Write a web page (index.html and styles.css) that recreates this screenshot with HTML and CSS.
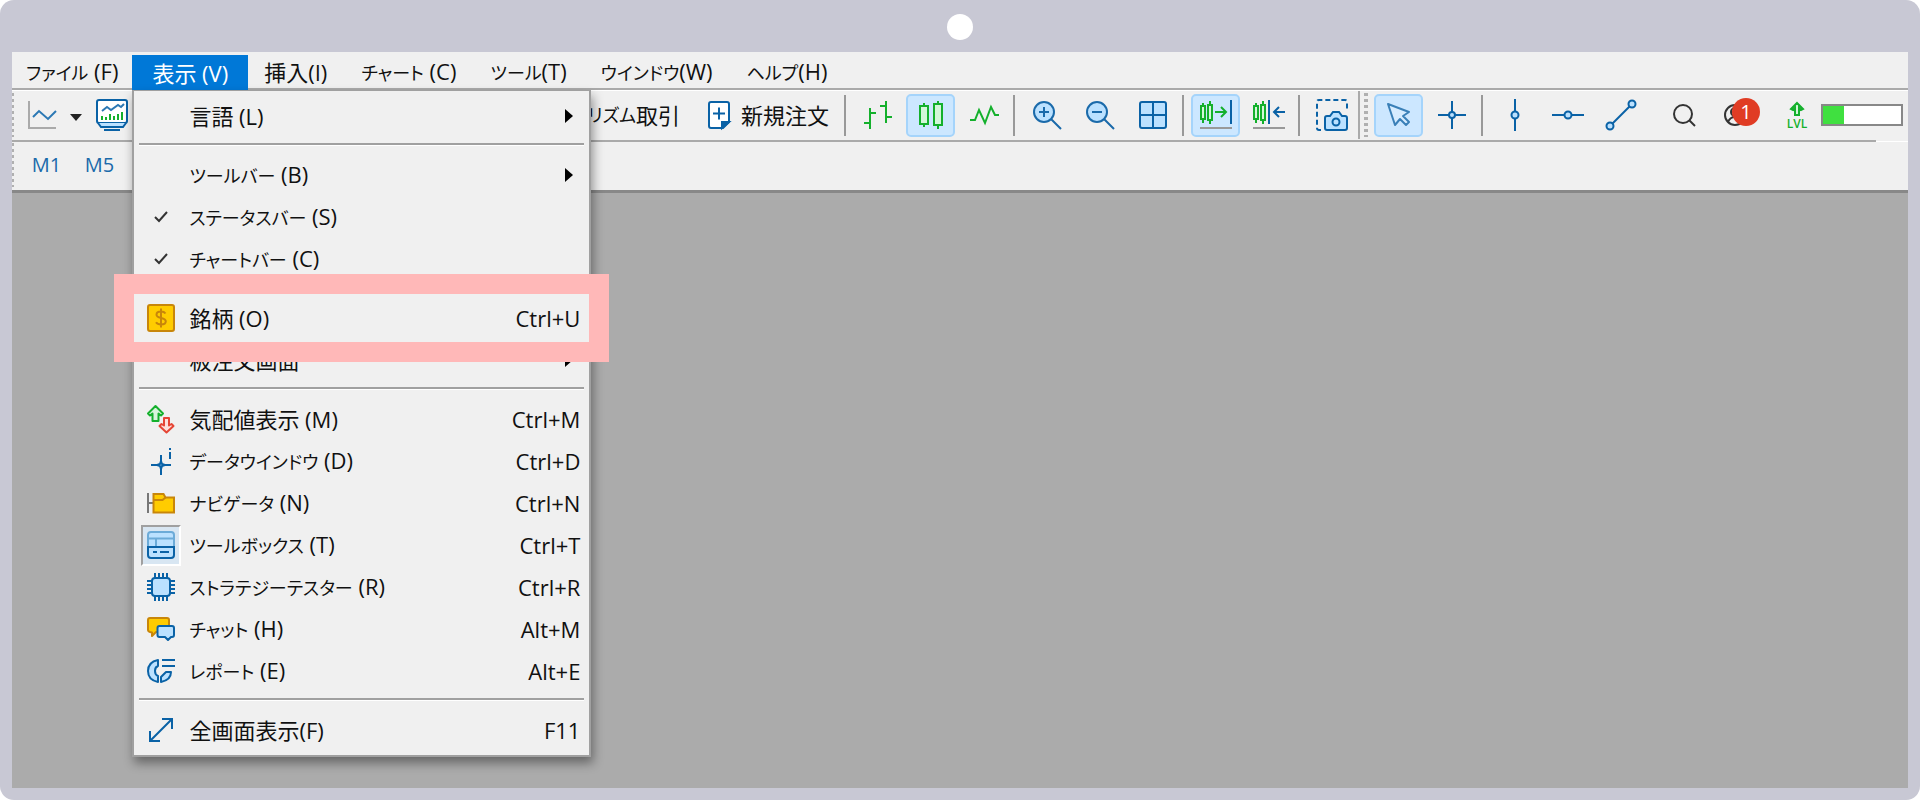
FILE: index.html
```html
<!DOCTYPE html>
<html lang="ja">
<head>
<meta charset="utf-8">
<meta name="viewport" content="width=device-width, initial-scale=1">
<title>表示</title>
<link rel="stylesheet" href="styles.css">
</head>
<body>
<div class="device">
  <div class="bezel"><span class="camera"></span></div>
  <div class="app">
    <nav class="menubar">
      <button class="menubar-item"><span class="kana">ファイル</span> (F)</button>
      <div class="menubar-open">
        <button class="menubar-item active" aria-expanded="true">表示 (V)</button>
        <div class="menu" role="menu">
          <button class="row" role="menuitem"><span class="ico"></span><span class="label">言語 (L)</span><span class="arrow"></span></button>
          <hr>
          <button class="row" role="menuitem"><span class="ico"></span><span class="label"><span class="kana">ツールバー</span> (B)</span><span class="arrow"></span></button>
          <button class="row" role="menuitem"><span class="ico"><svg width="14" height="12" viewBox="0 0 14 12"><path d="M1 6l4 4L13 1" fill="none" stroke="#333" stroke-width="2"/></svg></span><span class="label"><span class="kana">ステータスバー</span> (S)</span></button>
          <button class="row" role="menuitem"><span class="ico"><svg width="14" height="12" viewBox="0 0 14 12"><path d="M1 6l4 4L13 1" fill="none" stroke="#333" stroke-width="2"/></svg></span><span class="label"><span class="kana">チャートバー</span> (C)</span></button>
          <hr>
          <button class="row marked" role="menuitem"><span class="ico"><svg width="28" height="28" viewBox="0 0 28 28"><rect x="1" y="1" width="26" height="26" rx="2" fill="#ffcc00" stroke="#c8860a" stroke-width="2"/><path d="M18.500 9.500C17.500 8 16 7.500 14 7.500c-2.500 0-4.500 1-4.500 3.200 0 4.300 9.300 2.200 9.300 6.600 0 2.200-2.100 3.200-4.800 3.200-2.200 0-4-.7-5-2.300M14 4.500v19" fill="none" stroke="#c8860a" stroke-width="2"/></svg></span><span class="label">銘柄 (O)</span><kbd>Ctrl+U</kbd></button>
          <button class="row" role="menuitem"><span class="ico"></span><span class="label">板注文画面</span><span class="arrow"></span></button>
          <hr>
          <button class="row" role="menuitem"><span class="ico"><svg width="28" height="28" viewBox="0 0 28 28" stroke-width="2" stroke-linejoin="round"><path d="M8.500 1L16 8.500l-2 2-2.500-2V16h-6V8.500l-2.500 2-2-2z" fill="#d8f5dc" stroke="#14b02c"/><path d="M19.500 27.500L12.500 21l2-2 2.500 1.500V13h5v7.500l2.500-1.500 2 2z" fill="#fde0dc" stroke="#e54535"/></svg></span><span class="label">気配値表示 (M)</span><kbd>Ctrl+M</kbd></button>
          <button class="row" role="menuitem"><span class="ico"><svg width="28" height="28" viewBox="0 0 28 28" fill="none" stroke="#0a62a6" stroke-width="2"><path d="M14 8v7M14 21v7M4 18h7M17 18h7M23 5v7M23 1v2"/><path d="M14 14l1 3 3 1-3 1-1 3-1-3-3-1 3-1z" fill="#bbe1ff"/></svg></span><span class="label"><span class="kana">データウインドウ</span> (D)</span><kbd>Ctrl+D</kbd></button>
          <button class="row" role="menuitem"><span class="ico"><svg width="28" height="28" viewBox="0 0 28 28"><path d="M1 4v20M1 14h5" fill="none" stroke="#777" stroke-width="2"/><path d="M6.500 5h10l2 3.500h8.500v15H6.500z" fill="#ffcc00" stroke="#c8860a" stroke-width="2"/><path d="M6.500 11h9l3-2.500" fill="none" stroke="#c8860a" stroke-width="2"/></svg></span><span class="label"><span class="kana">ナビゲータ</span> (N)</span><kbd>Ctrl+N</kbd></button>
          <button class="row" role="menuitem"><span class="ico pressed"><svg width="28" height="28" viewBox="0 0 28 28" stroke-width="2"><path d="M1 16V4q0-3 3-3h20q3 0 3 3v12z" fill="#bbe1ff" stroke="#6cabd8"/><path d="M1 7.500h26M9 7.500V16" stroke="#6cabd8"/><path d="M1 16h26v8q0 3-3 3H4q-3 0-3-3z" fill="#bbe1ff" stroke="#0a62a6"/><path d="M6 21h4M13 21h9" stroke="#0a62a6"/></svg></span><span class="label"><span class="kana">ツールボックス</span> (T)</span><kbd>Ctrl+T</kbd></button>
          <button class="row" role="menuitem"><span class="ico"><svg width="28" height="28" viewBox="0 0 28 28" stroke="#0a62a6" stroke-width="2"><path d="M8 0v28M12 0v28M16 0v28M20 0v28M0 8h28M0 12h28M0 16h28M0 20h28"/><rect x="5" y="5" width="18" height="18" rx="3" fill="#bbe1ff"/></svg></span><span class="label"><span class="kana">ストラテジーテスター</span> (R)</span><kbd>Ctrl+R</kbd></button>
          <button class="row" role="menuitem"><span class="ico"><svg width="28" height="28" viewBox="0 0 28 28" stroke-width="2" stroke-linejoin="round"><path d="M3 3h17q2 0 2 2v10q0 2-2 2H9l-4 4v-3.500Q1 17 1 15V5q0-2 2-2z" fill="#ffcc00" stroke="#c8860a"/><path d="M12.500 11h12.500q2 0 2 2v7q0 2-2 2h-1l-3 3-3-3h-5.500q-2 0-2-2v-7q0-2 2-2z" fill="#bbe1ff" stroke="#0a62a6"/></svg></span><span class="label"><span class="kana">チャット</span> (H)</span><kbd>Alt+M</kbd></button>
          <button class="row" role="menuitem"><span class="ico"><svg width="28" height="28" viewBox="0 0 28 28" fill="#bbe1ff" stroke="#0a62a6" stroke-width="2" stroke-linejoin="round"><path d="M11 3v6q-3 1-3 5t3 5v6Q1 23 1 14T11 3zM14 25v-5l5-5h5q0 8-10 10z"/><path d="M15 3h13M15 9h13"/></svg></span><span class="label"><span class="kana">レポート</span> (E)</span><kbd>Alt+E</kbd></button>
          <hr>
          <button class="row" role="menuitem"><span class="ico"><svg width="28" height="28" viewBox="0 0 28 28" fill="none" stroke="#0a62a6" stroke-width="2"><path d="M3 25L25 3M15 3h10v10M3 15v10h10"/></svg></span><span class="label">全画面表示(F)</span><kbd>F11</kbd></button>
        </div>
      </div>
      <button class="menubar-item">挿入(I)</button>
      <button class="menubar-item"><span class="kana">チャート</span> (C)</button>
      <button class="menubar-item"><span class="kana">ツール</span>(T)</button>
      <button class="menubar-item"><span class="kana">ウインドウ</span>(W)</button>
      <button class="menubar-item"><span class="kana">ヘルプ</span>(H)</button>
    </nav>

    <div class="toolbar">
      <span class="grip"></span>
      <div class="tools-start">
        <button class="tool narrow" aria-label="チャート"><svg width="30" height="30" viewBox="0 0 30 30" fill="none" stroke-width="2"><path d="M2 1v27h27" stroke="#aaa"/><path d="M6 17l6-6 9 8 8-8" stroke="#2b78b4"/></svg></button>
        <span class="caret"></span>
        <button class="tool narrow" aria-label="画面"><svg width="32" height="32" viewBox="0 0 32 32" fill="none" stroke="#0a62a6" stroke-width="2"><rect x="1" y="1" width="30" height="23" rx="2" fill="#fff"/><path d="M2 24l3 4h22l3-4M8 31h16" fill="#bbe1ff"/><path d="M6 12l5-4 4 3 7-5 3 2 3-3" stroke="#2b78b4"/><path d="M6 21v-4M10 21v-3M14 21v-6M18 21v-4M22 21v-6M26 21v-8" stroke="#14b02c"/></svg></button>
        <button class="tool text algo"><span class="kana">アルゴリズム</span>取引</button>
      </div>
      <button class="tool text order"><svg width="22" height="28" viewBox="0 0 22 28" fill="#fff" stroke="#0a62a6" stroke-width="2"><path d="M3 1h16q2 0 2 2v18l-6 6H3q-2 0-2-2V3q0-2 2-2z"/><path d="M14 27v-6h7z" fill="#0a62a6"/><path d="M5 12.500h12M11 6.500v12"/></svg>新規注文</button>
      <span class="sep"></span>
      <button class="tool" aria-label="バー"><svg width="30" height="30" viewBox="0 0 30 30" fill="none" stroke="#14b02c" stroke-width="2"><path d="M7 8v21M1 23h6M7 13h6M23 1v22M17 6h6M23 17h6"/></svg></button>
      <button class="tool on" aria-label="ローソク足"><svg width="24" height="30" viewBox="0 0 24 30" fill="#d3f7d9" stroke="#14b02c" stroke-width="2"><path d="M5 3v24M19 1v28"/><rect x="1" y="6" width="8" height="18"/><rect x="15" y="4" width="8" height="21"/></svg></button>
      <button class="tool" aria-label="ライン"><svg width="30" height="30" viewBox="0 0 30 30" fill="none" stroke="#14b02c" stroke-width="2"><path d="M1 20h5l4-10 6 13 6-16 4 8h4"/></svg></button>
      <span class="sep"></span>
      <button class="tool" aria-label="拡大"><svg width="30" height="30" viewBox="0 0 30 30" fill="#bbe1ff" stroke="#1a6aaa" stroke-width="2"><circle cx="12" cy="12" r="10"/><path d="M7 12h10M12 7v10M19 19l10 10"/></svg></button>
      <button class="tool" aria-label="縮小"><svg width="30" height="30" viewBox="0 0 30 30" fill="#bbe1ff" stroke="#1a6aaa" stroke-width="2"><circle cx="12" cy="12" r="10"/><path d="M7 12h10M19 19l10 10"/></svg></button>
      <button class="tool" aria-label="整列"><svg width="28" height="28" viewBox="0 0 28 28" fill="#bbe1ff" stroke="#0a62a6" stroke-width="2"><rect x="1" y="1" width="26" height="26" rx="2"/><path d="M14 1v26M1 14h26"/></svg></button>
      <span class="sep"></span>
      <button class="tool on" aria-label="自動スクロール"><svg width="32" height="30" viewBox="0 0 32 30" fill="#d3f7d9" stroke="#14b02c" stroke-width="2"><path d="M3 3v20M10 1v23"/><rect x="1" y="6" width="4" height="13"/><rect x="8" y="5" width="4" height="15"/><path d="M15 12h11M21 7l5 5-5 5" fill="none"/><path d="M31 0v24" stroke="#0a62a6"/><path d="M0 28h32" stroke="#999"/></svg></button>
      <button class="tool" aria-label="チャートシフト"><svg width="32" height="30" viewBox="0 0 32 30" fill="#d3f7d9" stroke="#14b02c" stroke-width="2"><path d="M3 3v20M10 1v23"/><rect x="1" y="6" width="4" height="13"/><rect x="8" y="5" width="4" height="15"/><path d="M32 12H21M26 7l-5 5 5 5" fill="none" stroke="#0a62a6"/><path d="M16 0v24" stroke="#0a62a6"/><path d="M0 28h32" stroke="#999"/></svg></button>
      <span class="sep"></span>
      <button class="tool" aria-label="スクリーンショット"><svg width="32" height="32" viewBox="0 0 32 32" fill="none" stroke="#0a62a6" stroke-width="2"><path d="M5 31H3q-2 0-2-2V3q0-2 2-2h26q2 0 2 2v9" stroke-dasharray="5 3"/><path d="M11 17h3l3-4h6l3 4h3q2 0 2 2v10q0 2-2 2H11q-2 0-2-2V19q0-2 2-2z" fill="#bbe1ff"/><circle cx="20" cy="23" r="3.500"/></svg></button>
      <span class="edge"></span>
      <span class="grip inner"></span>
      <button class="tool on" aria-label="カーソル"><svg width="24" height="24" viewBox="0 0 24 24" fill="#d6ecff" stroke="#3a80b8" stroke-width="2" stroke-linejoin="round"><path d="M1 1l21 8-6 4 6 6-3 3-6-6-5 6z"/></svg></button>
      <button class="tool" aria-label="十字線"><svg width="28" height="28" viewBox="0 0 28 28" fill="#bbe1ff" stroke="#0a62a6" stroke-width="2"><path d="M14 0v28M0 14h28"/><circle cx="14" cy="14" r="3"/></svg></button>
      <span class="sep"></span>
      <button class="tool" aria-label="垂直線"><svg width="32" height="32" viewBox="0 0 32 32" fill="#bbe1ff" stroke="#0a62a6" stroke-width="2"><path d="M16 0v32"/><circle cx="16" cy="16" r="3.500"/></svg></button>
      <button class="tool" aria-label="水平線"><svg width="32" height="32" viewBox="0 0 32 32" fill="#bbe1ff" stroke="#0a62a6" stroke-width="2"><path d="M0 16h32"/><circle cx="16" cy="16" r="3.500"/></svg></button>
      <button class="tool" aria-label="トレンドライン"><svg width="32" height="32" viewBox="0 0 32 32" fill="#bbe1ff" stroke="#0a62a6" stroke-width="2"><path d="M5 27L27 5"/><circle cx="5" cy="27" r="3.500"/><circle cx="27" cy="5" r="3.500"/></svg></button>
      <div class="tools-end">
        <button class="tool" aria-label="検索"><svg width="24" height="24" viewBox="0 0 24 24" fill="none" stroke="#333" stroke-width="2"><circle cx="10" cy="11" r="9"/><path d="M16 17l6 6"/></svg></button>
        <button class="tool account" aria-label="アカウント"><svg width="24" height="24" viewBox="0 0 24 24" fill="none" stroke="#333" stroke-width="2"><circle cx="12" cy="12" r="10"/><circle cx="12" cy="9" r="4"/><path d="M5 19q2-5 7-5t7 5"/></svg><span class="badge">1</span></button>
        <span class="level"><svg width="16" height="16" viewBox="0 0 16 16" fill="#d3f7d9" stroke="#14b02c" stroke-width="2"><path d="M8 2l6 6-2 1-2-2v7H6V7L4 9 2 8z"/></svg>LVL</span>
        <span class="gauge"><span class="gauge-fill"></span></span>
      </div>
    </div>

    <div class="toolbar periods">
      <span class="grip"></span>
      <button class="period">M1</button>
      <button class="period">M5</button>
    </div>
    <main class="workspace"></main>
  </div>
</div>
</body>
</html>
```
FILE: styles.css
```css
* { box-sizing: border-box; }
body {
  margin: 0;
  background: #fff;
  color: #111;
  font: 22px/26px "Open Sans", "Noto Sans CJK JP", sans-serif;
}
button {
  border: 0;
  padding: 0;
  background: none;
  color: inherit;
  font: inherit;
  white-space: nowrap;
}
svg { flex: none; overflow: visible; }
.kana { font-size: 18px; font-feature-settings: "palt"; }

.device {
  display: flex;
  flex-direction: column;
  min-height: 100vh;
  padding: 0 12px 12px;
  border-radius: 14px;
  background: #c8c8d4;
}
.bezel { display: flex; justify-content: center; height: 52px; padding-top: 14px; }
.camera { width: 26px; height: 26px; border-radius: 50%; background: #fff; }
.app { display: flex; flex: 1; flex-direction: column; background: #f0f0f0; }

.menubar {
  display: flex;
  height: 38px;
  padding-top: 3px;
  border-bottom: 2px solid #aaa;
}
.menubar-open { position: relative; }
.menubar-item { height: 33px; padding: 0 18px 0 16px; }
.menubar-item:first-child { padding: 0 14px; }
.menubar-item.active {
  height: 35px;
  padding: 0 20px;
  background: #0078d7;
  color: #fff;
}

.menu {
  position: absolute;
  z-index: 5;
  top: 35px;
  left: 0;
  width: 459px;
  padding: 4px 0;
  border: 2px solid #a0a0a0;
  border-top-width: 1px;
  background: #f0f0f0;
  box-shadow: 2px 6px 10px rgba(0, 0, 0, 0.4);
}
.menu hr {
  height: 3px;
  margin: 6px 5px 8px;
  border: 0;
  border-top: 2px solid #a0a0a0;
  background: #fff;
}
.row {
  display: flex;
  position: relative;
  align-items: center;
  width: 100%;
  height: 42px;
  padding: 0 9px 0 7px;
  text-align: left;
}
.ico {
  display: flex;
  flex: none;
  align-items: center;
  justify-content: center;
  width: 40px;
  height: 41px;
  margin-right: 8px;
}
.ico.pressed {
  border: 2px solid;
  border-color: #a0a0a0 #fff #fff #a0a0a0;
  background: #d8e6f2;
}
.label { flex: 1; }
kbd { font: inherit; }
.arrow {
  margin-right: 7px;
  border: 7px solid transparent;
  border-right: 0;
  border-left: 8px solid #000;
}
.marked { z-index: 1; }
.marked::after {
  content: "";
  position: absolute;
  inset: -23px -20px;
  border: 20px solid #ffb8b8;
}

.toolbar {
  display: flex;
  align-items: center;
  height: 51px;
  padding: 0 5px 2px 0;
  border-top: 1px solid #fff;
}
.grip {
  flex: none;
  width: 2px;
  height: 44px;
  background: repeating-linear-gradient(#b0b0b0 0 3px, transparent 3px 6px);
}
.grip.inner { width: 4px; margin: 0 4px; }
.tools-start { display: flex; flex: none; align-items: center; width: 666px; padding-left: 10px; }
.tool {
  display: flex;
  flex: none;
  align-items: center;
  justify-content: center;
  width: 49px;
  height: 43px;
  margin: 0 2px;
}
.tool.on { border: 2px solid #a5d4fb; border-radius: 5px; background: #cce7ff; }
.tool.narrow { width: 32px; }
.tool.text { width: auto; margin: 0; }
.tool.order { gap: 11px; margin: 0 12px 0 28px; }
.tool.algo { margin-left: auto; }
.caret {
  margin: 4px 12px 0 10px;
  border: 6px solid transparent;
  border-top: 7px solid #222;
  border-bottom: 0;
}
.sep { flex: none; width: 2px; height: 41px; margin: 0 5px 0 3px; background: #999; }
.edge { flex: none; align-self: stretch; width: 2px; background: #aaa; }
.tools-end { display: flex; align-items: center; margin-left: auto; }
.account { position: relative; padding-right: 5px; }
.badge {
  position: absolute;
  top: 4px;
  right: 2px;
  width: 28px;
  height: 28px;
  border-radius: 50%;
  background: #e03c24;
  color: #fff;
  font-size: 20px;
  line-height: 28px;
}
.level {
  display: flex;
  flex-direction: column;
  align-items: center;
  width: 22px;
  margin: 0 13px 0 22px;
  color: #14b02c;
  font-size: 12px;
  font-weight: 600;
  line-height: 13px;
}
.gauge { width: 82px; height: 22px; border: 2px solid #888; background: #fff; }
.gauge-fill { display: block; width: 27%; height: 100%; background: #40e040; }

.periods { position: relative; height: 52px; padding-left: 0; border-bottom: 3px solid #888; }
.periods::before {
  content: "";
  position: absolute;
  top: -2px;
  left: 0;
  right: 32px;
  height: 2px;
  background: #aaa;
}
.periods .grip { margin-right: 6px; }
.period { width: 53px; color: #1a6aaa; font-size: 20px; text-align: center; }
.workspace { flex: 1; background: #ababab; }
```
